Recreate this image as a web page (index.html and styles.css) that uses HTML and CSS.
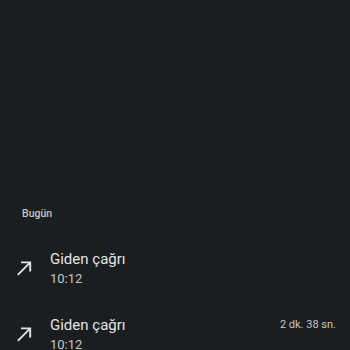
FILE: index.html
```html
<!DOCTYPE html>
<html lang="tr">
<head>
  <meta charset="UTF-8">
  <meta name="viewport" content="width=device-width, initial-scale=1.0">
  <title>Arama geçmişi</title>
  <link rel="stylesheet" href="styles.css">
</head>
<body>
  <div class="call-log">
    <div class="day-header">Bugün</div>

    <div class="call-row">
      <div class="call-icon">
        <svg viewBox="0 0 16 16" width="16" height="16"><path d="M1.8 14.8L14 2.6M5 2.4H14.2V11.6"/></svg>
      </div>
      <div class="call-info">
        <div class="call-title">Giden çağrı</div>
        <div class="call-time">10:12</div>
      </div>
    </div>

    <div class="call-row">
      <div class="call-icon">
        <svg viewBox="0 0 16 16" width="16" height="16"><path d="M1.8 14.8L14 2.6M5 2.4H14.2V11.6"/></svg>
      </div>
      <div class="call-info">
        <div class="call-title">Giden çağrı</div>
        <div class="call-time">10:12</div>
      </div>
      <div class="call-duration">2 dk. 38 sn.</div>
    </div>
  </div>
</body>
</html>
```

FILE: styles.css
```css
body {
  margin: 0;
  background-color: #1b1e20;
  font-family: Roboto, "Noto Sans", sans-serif;
  height: 100vh;
  overflow: hidden;
}

.call-log {
  padding-top: 207px;
  display: flex;
  flex-direction: column;
}

.day-header {
  font-size: 10.5px;
  line-height: 14px;
  font-weight: 500;
  color: #c4c7c5;
  padding-left: 22px;
  margin-bottom: 28px;
}

.call-row {
  display: flex;
  align-items: flex-start;
  height: 66px;
}

.call-icon {
  width: 16px;
  height: 16px;
  margin: 11px 18px 0 16px;
}

.call-icon svg {
  display: block;
  fill: none;
  stroke: #e3e3e3;
  stroke-width: 1.9;
}

.call-info {
  flex: 1;
}

.call-title {
  font-size: 15px;
  line-height: 20px;
  color: #e3e3e3;
}

.call-time {
  font-size: 13px;
  line-height: 17px;
  color: #c4c7c5;
  margin-top: 1px;
}

.call-duration {
  font-size: 11px;
  line-height: 20px;
  color: #c4c7c5;
  padding-right: 14px;
}
```
